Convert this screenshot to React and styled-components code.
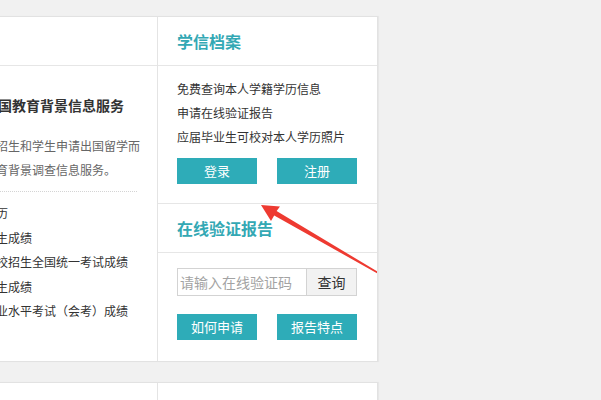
import React from 'react';
import styled, { createGlobalStyle } from 'styled-components';

const GlobalStyle = createGlobalStyle`
  html, body { margin: 0; padding: 0; background: #f1f1f1; }
  body {
    font-family: "Noto Sans CJK SC", "Noto Sans", sans-serif;
    overflow: hidden;
  }
  * { box-sizing: border-box; }
`;

const Page = styled.div`
  position: relative;
  width: 601px;
  height: 400px;
  padding-top: 16px;
  overflow: hidden;
`;

const Panel = styled.section`
  display: flex;
  width: 419px;
  margin-left: -41px;
  margin-top: ${(p) => p.$mt || 0}px;
  height: ${(p) => (p.$h ? `${p.$h}px` : 'auto')};
  background: #fff;
  border: 1px solid #e2e2e2;
  box-shadow: 1px 0 1px rgba(0, 0, 0, 0.04);
`;

const LeftCol = styled.div`
  width: 198px;
  flex-shrink: 0;
  border-right: 1px solid #e4e4e4;
`;

const LeftHeader = styled.div`
  height: 49px;
  border-bottom: 1px solid #e6e6e6;
`;

const LeftBody = styled.div`
  padding: 27px 20px 0 24px;
  white-space: nowrap;
`;

const ServiceTitle = styled.h3`
  margin: 0;
  font-size: 14px;
  font-weight: 700;
  line-height: 24px;
  color: #333;
`;

const Desc = styled.p`
  margin: 17px 0 0;
  padding-bottom: 9px;
  border-bottom: 1px dotted #d4d4d4;
  font-size: 12px;
  line-height: 24px;
  color: #666;
`;

const DescLine = styled.span`
  display: block;
`;

const ItemList = styled.ul`
  margin: 9px 0 0;
  padding: 0;
  list-style: none;
`;

const Item = styled.li`
  font-size: 12px;
  line-height: 24.5px;
  color: #333;
`;

const RightCol = styled.div`
  width: 219px;
  flex-shrink: 0;
`;

const SectionHeader = styled.div`
  height: 49px;
  display: flex;
  align-items: center;
  padding: 0 20px 0 19px;
  border-bottom: 1px solid #e6e6e6;
`;

const SectionTitle = styled.h2`
  margin: 0;
  font-size: 16px;
  font-weight: 700;
  line-height: 24px;
  color: #33a8b4;
`;

const SectionBody = styled.div`
  padding: ${(p) => p.$pad};
  border-bottom: ${(p) => (p.$divider ? '1px solid #e6e6e6' : 'none')};
`;

const InfoList = styled.ul`
  margin: 0;
  padding: 0;
  list-style: none;
`;

const InfoItem = styled.li`
  font-size: 12px;
  line-height: 24px;
  color: #333;
  white-space: nowrap;
`;

const ButtonRow = styled.div`
  display: flex;
  gap: 20px;
  margin-top: ${(p) => p.$mt}px;
`;

const ActionButton = styled.button`
  width: 80px;
  height: 26px;
  padding: 0;
  border: none;
  background: #2eacb8;
  color: #fff;
  font-family: inherit;
  font-size: 13px;
  line-height: 26px;
  cursor: pointer;
`;

const SearchGroup = styled.div`
  display: flex;
  height: 28px;
`;

const CodeInput = styled.input`
  width: 130px;
  height: 28px;
  margin: 0;
  padding: 0 2px;
  border: 1px solid #d3d3d3;
  outline: none;
  font-family: inherit;
  font-size: 14px;
  color: #333;
  &::placeholder { color: #a3a3a3; }
`;

const QueryButton = styled.button`
  width: 50px;
  height: 28px;
  margin: 0;
  padding: 0;
  border: 1px solid #d3d3d3;
  border-left: none;
  background: #f2f2f2;
  font-family: inherit;
  font-size: 14px;
  color: #333;
`;

const ArrowLayer = styled.svg`
  position: absolute;
  left: 0;
  top: 0;
  pointer-events: none;
`;

export default function App() {
  return (
    <>
      <GlobalStyle />
      <Page>
        <Panel>
          <LeftCol>
            <LeftHeader />
            <LeftBody>
              <ServiceTitle>出国教育背景信息服务</ServiceTitle>
              <Desc>
                <DescLine>校招生和学生申请出国留学而</DescLine>
                <DescLine>教育背景调查信息服务。</DescLine>
              </Desc>
              <ItemList>
                <Item>学历</Item>
                <Item>学生成绩</Item>
                <Item>高校招生全国统一考试成绩</Item>
                <Item>学生成绩</Item>
                <Item>学业水平考试（会考）成绩</Item>
              </ItemList>
            </LeftBody>
          </LeftCol>
          <RightCol>
            <SectionHeader>
              <SectionTitle>学信档案</SectionTitle>
            </SectionHeader>
            <SectionBody $pad="11px 20px 19px 19px" $divider>
              <InfoList>
                <InfoItem>免费查询本人学籍学历信息</InfoItem>
                <InfoItem>申请在线验证报告</InfoItem>
                <InfoItem>应届毕业生可校对本人学历照片</InfoItem>
              </InfoList>
              <ButtonRow $mt={9}>
                <ActionButton>登录</ActionButton>
                <ActionButton>注册</ActionButton>
              </ButtonRow>
            </SectionBody>
            <SectionHeader>
              <SectionTitle>在线验证报告</SectionTitle>
            </SectionHeader>
            <SectionBody $pad="15px 20px 21px 19px">
              <SearchGroup>
                <CodeInput placeholder="请输入在线验证码" />
                <QueryButton>查询</QueryButton>
              </SearchGroup>
              <ButtonRow $mt={18}>
                <ActionButton>如何申请</ActionButton>
                <ActionButton>报告特点</ActionButton>
              </ButtonRow>
            </SectionBody>
          </RightCol>
        </Panel>
        <Panel $mt={20} $h={60}>
          <LeftCol />
          <RightCol />
        </Panel>
        <ArrowLayer width="601" height="400" viewBox="0 0 601 400">
          <polygon
            points="261,205 280,206.5 276.6,211 377,271.3 377,273.2 274.2,215.6 271,221"
            fill="#ee3a31"
          />
        </ArrowLayer>
      </Page>
    </>
  );
}
